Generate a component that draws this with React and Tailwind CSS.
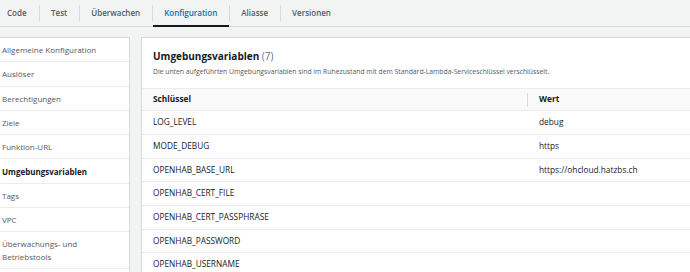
const TABS = ['Code', 'Test', 'Überwachen', 'Konfiguration', 'Aliasse', 'Versionen'];

const NAV = [
  'Allgemeine Konfiguration',
  'Auslöser',
  'Berechtigungen',
  'Ziele',
  'Funktion-URL',
  'Umgebungsvariablen',
  'Tags',
  'VPC',
  'Überwachungs- und Betriebstools',
];

const VARS = [
  { key: 'LOG_LEVEL', value: 'debug' },
  { key: 'MODE_DEBUG', value: 'https' },
  { key: 'OPENHAB_BASE_URL', value: 'https://ohcloud.hatzbs.ch' },
  { key: 'OPENHAB_CERT_FILE', value: '' },
  { key: 'OPENHAB_CERT_PASSPHRASE', value: '' },
  { key: 'OPENHAB_PASSWORD', value: '' },
  { key: 'OPENHAB_USERNAME', value: '' },
];

export default function App() {
  return (
    <div className="w-[690px] h-[272px] overflow-hidden bg-[#f2f3f3] text-[#16191f] font-['Open_Sans',sans-serif]">
      {/* Tabs */}
      <div className="h-[27px] flex items-stretch border-b border-[#d5dbdb]">
        {TABS.map((t, i) => (
          <div key={t} className="flex items-center">
            {i > 0 && <div className="w-px h-[16px] bg-[#d5dbdb]" />}
            <div
              className={
                'h-full flex items-center text-[8px] font-semibold ' +
                (i === 0 ? 'pl-[7px] pr-[12px] ' : 'px-[11.5px] ') +
                (t === 'Konfiguration'
                  ? 'text-[#0073bb] border-b-2 border-[#16191f] -mb-px'
                  : 'text-[#545b64]')
              }
            >
              {t}
            </div>
          </div>
        ))}
      </div>

      <div className="flex gap-[11px] pt-[10px]">
        {/* Sidebar */}
        <div className="w-[130px] shrink-0 bg-white border-r border-t border-[#d5dbdb]">
          {NAV.map((n) => (
            <div
              key={n}
              className={
                'px-[2px] border-b border-[#eaeded] text-[8px] leading-[13px] ' +
                (n === 'Überwachungs- und Betriebstools' ? 'py-[5px] pr-[40px]' : 'h-[24.3px] flex items-center') +
                (n === 'Umgebungsvariablen' ? ' font-bold' : ' text-[#545b64]')
              }
            >
              {n}
            </div>
          ))}
        </div>

        {/* Main panel */}
        <div className="flex-1 bg-white border-l border-t border-[#d5dbdb]">
          <div className="px-[11px] pt-[10px] pb-[11px]">
            <div className="text-[10px] font-bold leading-[16px]">
              Umgebungsvariablen <span className="font-normal text-[#687078]">(7)</span>
            </div>
            <div className="text-[6.8px] text-[#545b64] mt-[3px]">
              Die unten aufgeführten Umgebungsvariablen sind im Ruhezustand mit dem Standard-Lambda-Serviceschlüssel verschlüsselt.
            </div>
          </div>
          <div className="flex h-[23px] bg-[#fafafa] border-t border-b border-[#eaeded] text-[8.3px] font-bold items-center">
            <div className="w-[385px] pl-[11px]">Schlüssel</div>
            <div className="w-px h-[14px] bg-[#d5dbdb]" />
            <div className="pl-[11px]">Wert</div>
          </div>
          {VARS.map((v) => (
            <div key={v.key} className="flex h-[23.7px] items-center border-b border-[#eaeded] text-[8.3px]">
              <div className="w-[386px] pl-[11px]">{v.key}</div>
              <div className="pl-[11px]">{v.value}</div>
            </div>
          ))}
        </div>
      </div>
    </div>
  );
}
